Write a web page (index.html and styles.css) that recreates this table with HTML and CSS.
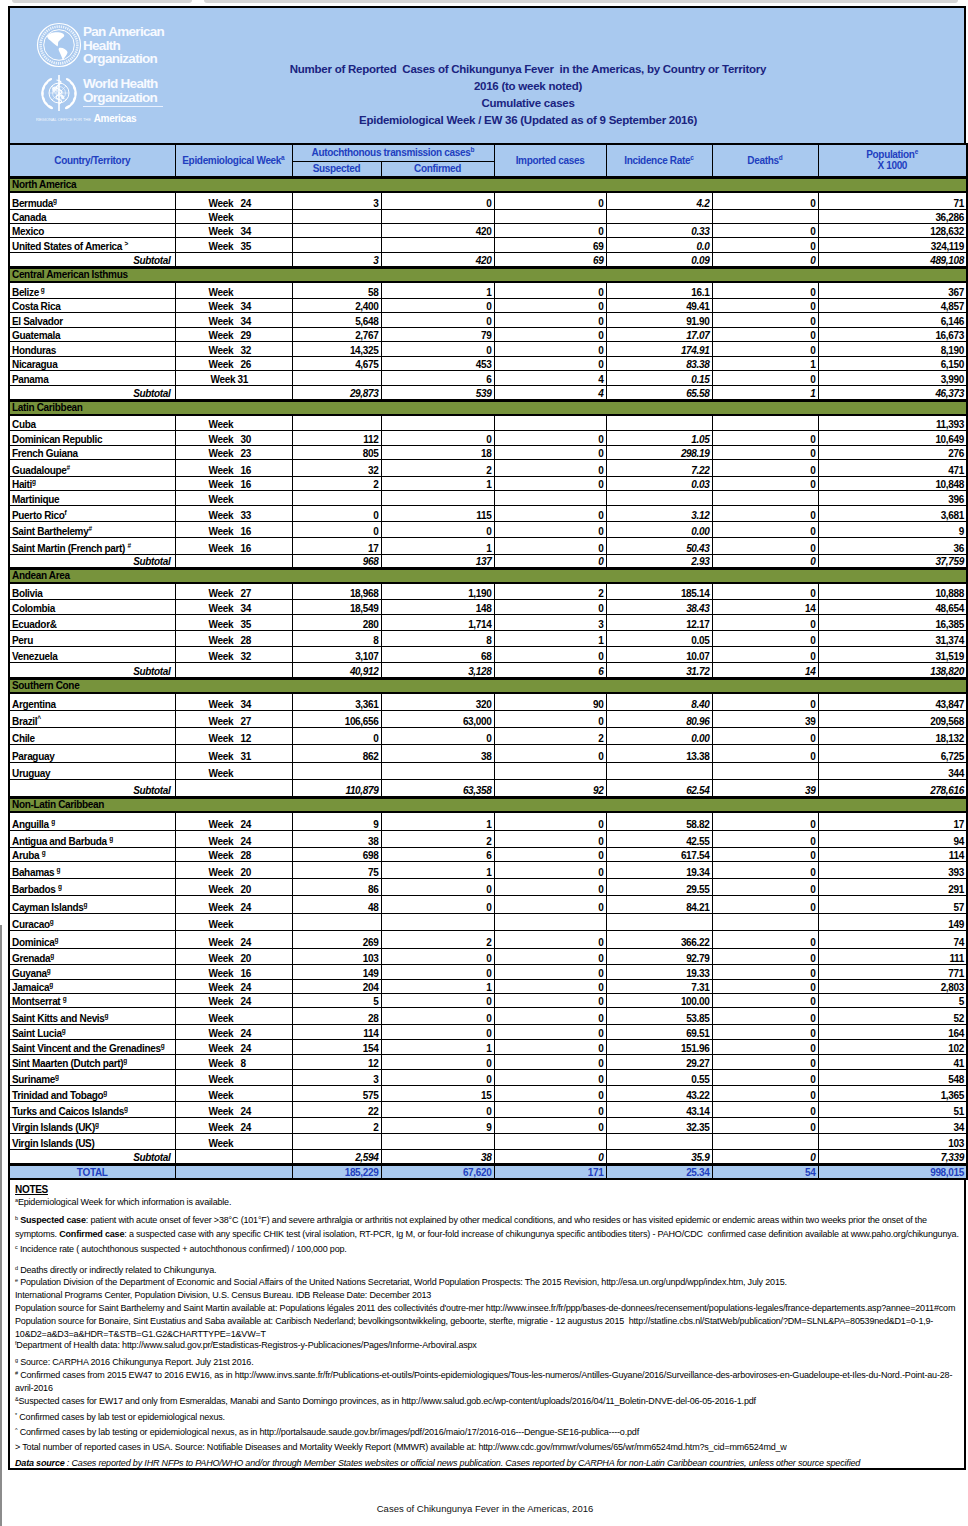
FILE: index.html
```html
<!DOCTYPE html>
<html>
<head>
<meta charset="utf-8">
<link rel="stylesheet" href="styles.css">
</head>
<body>
<div class="strip"><span class="a"></span><span class="b"></span></div>
<div class="doc">
  <div class="hdr">
    <div class="logos">
      <div class="lrow">
        <svg class="paho" width="46" height="46" viewBox="0 0 46 46">
          <circle cx="23" cy="23" r="21.5" fill="none" stroke="#fff" stroke-width="1.2"/>
          <circle cx="23" cy="23" r="18.4" fill="none" stroke="#fff" stroke-width="2.6" stroke-dasharray="1.3 0.9" opacity=".75"/>
          <circle cx="23" cy="23" r="15.3" fill="none" stroke="#fff" stroke-width="1"/>
          <path fill="#fff" d="M11 14C13 11 19 9.5 24 10.5C27 11 29.5 13 27.5 15C25.5 16 24.5 18 22.5 19.5C21.5 21 22.5 23 21.5 24.5C19.5 22.5 17 21.5 15.5 19.5C13.5 18 11.5 16.5 11 14Z"/>
          <path fill="#fff" d="M23 26C26 25 30 27 31.5 30C31.5 33 28.5 35 27 38.5C26 36 25 33 24 31C23 29 22 27.5 23 26Z"/>
        </svg>
        <div class="ltxt">Pan American<br>Health<br>Organization</div>
      </div>
      <div class="lrow two">
        <svg class="who" width="46" height="38" viewBox="0 0 46 38">
          <defs>
            <g id="lv" fill="#fff">
              <ellipse cx="14" cy="33" rx="3.4" ry="1.3" transform="rotate(30 14 33)"/>
              <ellipse cx="10" cy="29.5" rx="3.4" ry="1.3" transform="rotate(50 10 29.5)"/>
              <ellipse cx="7.5" cy="25" rx="3.4" ry="1.3" transform="rotate(70 7.5 25)"/>
              <ellipse cx="6.5" cy="19.5" rx="3.4" ry="1.3" transform="rotate(90 6.5 19.5)"/>
              <ellipse cx="7.5" cy="14" rx="3.4" ry="1.3" transform="rotate(110 7.5 14)"/>
              <ellipse cx="10" cy="9.5" rx="3.4" ry="1.3" transform="rotate(130 10 9.5)"/>
              <ellipse cx="13.5" cy="6" rx="3" ry="1.2" transform="rotate(150 13.5 6)"/>
            </g>
          </defs>
          <use href="#lv"/>
          <use href="#lv" transform="translate(46 0) scale(-1 1)"/>
          <g fill="none" stroke="#fff">
            <circle cx="23" cy="19" r="10" stroke-width="1"/>
            <circle cx="23" cy="19" r="6.5" stroke-width=".6"/>
            <circle cx="23" cy="19" r="3.2" stroke-width=".6"/>
            <path d="M13 19H33M16 12L30 26M30 12L16 26" stroke-width=".5"/>
          </g>
          <path fill="#fff" opacity=".85" d="M16 14C18 12 21 12 22 14C21 16 19 17 18 19C17 18 16 16 16 14ZM24 21C27 20 29 22 28 25C26 26 25 24 24 21Z"/>
          <path d="M23 1V37" stroke="#fff" stroke-width="1.6"/>
          <path d="M20.5 6C25 6.5 26.5 8.5 23 10.5S19 14 23 15.5S27 18.5 23 20.5S19 24 23 25.5S26 28 23 30" fill="none" stroke="#fff" stroke-width="1.2"/>
        </svg>
        <div class="ltxt">World Health<br>Organization<div class="uline"></div></div>
      </div>
      <div class="reg"><span class="tiny">REGIONAL OFFICE FOR THE</span> <b>Americas</b></div>
    </div>
    <div class="title">
      <div>Number of Reported&nbsp; Cases of Chikungunya Fever&nbsp; in the Americas, by Country or Territory</div>
      <div>2016 (to week noted)</div>
      <div>Cumulative cases</div>
      <div>Epidemiological Week / EW 36 (Updated as of 9 September 2016)</div>
    </div>
  </div>

  <table class="t">
    <colgroup>
      <col class="k1"><col class="k2"><col class="k3"><col class="k4"><col class="k5"><col class="k6"><col class="k7"><col class="k8">
    </colgroup>
    <thead>
      <tr class="hr1">
        <th rowspan="2">Country/Territory</th>
        <th rowspan="2">Epidemiological Week<sup>a</sup></th>
        <th colspan="2">Autochthonous transmission cases<sup>b</sup></th>
        <th rowspan="2">Imported cases</th>
        <th rowspan="2">Incidence Rate<sup>c</sup></th>
        <th rowspan="2">Deaths<sup>d</sup></th>
        <th rowspan="2">Population<sup>e</sup><br>X 1000</th>
      </tr>
      <tr class="hr2"><th>Suspected</th><th>Confirmed</th></tr>
    </thead>
    <tbody>
      <tr class="band"><td colspan="8">North America</td></tr>
      <tr class="r17"><td class="c">Bermuda<sup>g</sup></td><td class="w"><span class="wk">Week</span>24</td><td>3</td><td>0</td><td>0</td><td class="it">4.2</td><td>0</td><td>71</td></tr>
      <tr class="r14"><td class="c">Canada</td><td class="w"><span class="wk">Week</span></td><td></td><td></td><td></td><td></td><td></td><td class="nb">36,286</td></tr>
      <tr class="r14"><td class="c">Mexico</td><td class="w"><span class="wk">Week</span>34</td><td></td><td>420</td><td>0</td><td class="it">0.33</td><td>0</td><td>128,632</td></tr>
      <tr class="r15"><td class="c">United States of America <sup>&gt;</sup></td><td class="w"><span class="wk">Week</span>35</td><td></td><td></td><td class="nb">69</td><td class="it">0.0</td><td>0</td><td>324,119</td></tr>
      <tr class="r15 sub"><td>Subtotal</td><td></td><td>3</td><td>420</td><td>69</td><td>0.09</td><td>0</td><td>489,108</td></tr>

      <tr class="band"><td colspan="8">Central American Isthmus</td></tr>
      <tr class="r16"><td class="c">Belize<sup> g</sup></td><td class="w"><span class="wk">Week</span></td><td>58</td><td>1</td><td>0</td><td class="nb">16.1</td><td>0</td><td>367</td></tr>
      <tr class="r14"><td class="c">Costa Rica</td><td class="w"><span class="wk">Week</span>34</td><td>2,400</td><td>0</td><td>0</td><td class="nb">49.41</td><td>0</td><td>4,857</td></tr>
      <tr class="r15"><td class="c">El Salvador</td><td class="w"><span class="wk">Week</span>34</td><td>5,648</td><td>0</td><td>0</td><td class="nb">91.90</td><td>0</td><td>6,146</td></tr>
      <tr class="r14"><td class="c">Guatemala</td><td class="w"><span class="wk">Week</span>29</td><td>2,767</td><td>79</td><td>0</td><td class="it">17.07</td><td>0</td><td>16,673</td></tr>
      <tr class="r15"><td class="c">Honduras</td><td class="w"><span class="wk">Week</span>32</td><td>14,325</td><td>0</td><td>0</td><td class="it">174.91</td><td>0</td><td>8,190</td></tr>
      <tr class="r14"><td class="c">Nicaragua</td><td class="w"><span class="wk">Week</span>26</td><td>4,675</td><td>453</td><td>0</td><td class="it">83.38</td><td>1</td><td>6,150</td></tr>
      <tr class="r15"><td class="c">Panama</td><td class="w pw"><span class="wk2">Week</span>31</td><td></td><td>6</td><td>4</td><td class="it">0.15</td><td>0</td><td>3,990</td></tr>
      <tr class="r15 sub"><td>Subtotal</td><td></td><td>29,873</td><td>539</td><td>4</td><td class="nb">65.58</td><td>1</td><td>46,373</td></tr>

      <tr class="band"><td colspan="8">Latin Caribbean</td></tr>
      <tr class="r15"><td class="c">Cuba</td><td class="w"><span class="wk">Week</span></td><td></td><td></td><td></td><td></td><td></td><td>11,393</td></tr>
      <tr class="r15"><td class="c">Dominican Republic</td><td class="w"><span class="wk">Week</span>30</td><td>112</td><td>0</td><td>0</td><td class="it">1.05</td><td>0</td><td>10,649</td></tr>
      <tr class="r14"><td class="c">French Guiana</td><td class="w"><span class="wk">Week</span>23</td><td>805</td><td>18</td><td>0</td><td class="it">298.19</td><td>0</td><td>276</td></tr>
      <tr class="r17"><td class="c">Guadaloupe<sup>#</sup></td><td class="w"><span class="wk">Week</span>16</td><td>32</td><td>2</td><td>0</td><td class="it">7.22</td><td>0</td><td>471</td></tr>
      <tr class="r14"><td class="c">Haiti<sup>g</sup></td><td class="w"><span class="wk">Week</span>16</td><td>2</td><td>1</td><td>0</td><td class="it">0.03</td><td>0</td><td>10,848</td></tr>
      <tr class="r15"><td class="c">Martinique</td><td class="w"><span class="wk">Week</span></td><td></td><td></td><td></td><td></td><td></td><td>396</td></tr>
      <tr class="r16"><td class="c">Puerto Rico<sup>f</sup></td><td class="w"><span class="wk">Week</span>33</td><td>0</td><td>115</td><td>0</td><td class="it">3.12</td><td>0</td><td>3,681</td></tr>
      <tr class="r16"><td class="c">Saint Barthelemy<sup>#</sup></td><td class="w"><span class="wk">Week</span>16</td><td>0</td><td>0</td><td>0</td><td class="it">0.00</td><td>0</td><td>9</td></tr>
      <tr class="r17"><td class="c">Saint Martin (French part) <sup>#</sup></td><td class="w"><span class="wk">Week</span>16</td><td>17</td><td>1</td><td>0</td><td class="it">50.43</td><td>0</td><td>36</td></tr>
      <tr class="r14 sub"><td>Subtotal</td><td></td><td>968</td><td>137</td><td>0</td><td>2.93</td><td>0</td><td>37,759</td></tr>

      <tr class="band"><td colspan="8">Andean Area</td></tr>
      <tr class="r16"><td class="c">Bolivia</td><td class="w"><span class="wk">Week</span>27</td><td>18,968</td><td>1,190</td><td>2</td><td class="nb">185.14</td><td>0</td><td>10,888</td></tr>
      <tr class="r15"><td class="c">Colombia</td><td class="w"><span class="wk">Week</span>34</td><td>18,549</td><td>148</td><td>0</td><td class="it">38.43</td><td>14</td><td>48,654</td></tr>
      <tr class="r16"><td class="c">Ecuador&amp;</td><td class="w"><span class="wk">Week</span>35</td><td>280</td><td>1,714</td><td>3</td><td class="nb">12.17</td><td>0</td><td>16,385</td></tr>
      <tr class="r16"><td class="c">Peru</td><td class="w"><span class="wk">Week</span>28</td><td>8</td><td>8</td><td>1</td><td class="nb">0.05</td><td>0</td><td>31,374</td></tr>
      <tr class="r16"><td class="c">Venezuela</td><td class="w"><span class="wk">Week</span>32</td><td>3,107</td><td>68</td><td>0</td><td class="nb">10.07</td><td>0</td><td>31,519</td></tr>
      <tr class="r16 sub"><td>Subtotal</td><td></td><td>40,912</td><td>3,128</td><td>6</td><td>31.72</td><td>14</td><td>138,820</td></tr>

      <tr class="band"><td colspan="8">Southern Cone</td></tr>
      <tr class="r17"><td class="c">Argentina</td><td class="w"><span class="wk">Week</span>34</td><td>3,361</td><td>320</td><td>90</td><td class="it">8.40</td><td>0</td><td>43,847</td></tr>
      <tr class="r17"><td class="c">Brazil<sup>^</sup></td><td class="w"><span class="wk">Week</span>27</td><td>106,656</td><td>63,000</td><td>0</td><td class="it">80.96</td><td>39</td><td>209,568</td></tr>
      <tr class="r17"><td class="c">Chile</td><td class="w"><span class="wk">Week</span>12</td><td>0</td><td>0</td><td>2</td><td class="it">0.00</td><td>0</td><td>18,132</td></tr>
      <tr class="r18"><td class="c">Paraguay</td><td class="w"><span class="wk">Week</span>31</td><td>862</td><td>38</td><td>0</td><td class="nb">13.38</td><td>0</td><td>6,725</td></tr>
      <tr class="r17"><td class="c">Uruguay</td><td class="w"><span class="wk">Week</span></td><td></td><td></td><td></td><td></td><td></td><td>344</td></tr>
      <tr class="r18 sub"><td>Subtotal</td><td></td><td>110,879</td><td>63,358</td><td>92</td><td>62.54</td><td>39</td><td>278,616</td></tr>

      <tr class="band"><td colspan="8">Non-Latin Caribbean</td></tr>
      <tr class="r18"><td class="c">Anguilla <sup>g</sup></td><td class="w"><span class="wk">Week</span>24</td><td>9</td><td>1</td><td>0</td><td class="nb">58.82</td><td>0</td><td>17</td></tr>
      <tr class="r17"><td class="c">Antigua and Barbuda <sup>g</sup></td><td class="w"><span class="wk">Week</span>24</td><td>38</td><td>2</td><td>0</td><td class="nb">42.55</td><td>0</td><td>94</td></tr>
      <tr class="r14"><td class="c">Aruba <sup>g</sup></td><td class="w"><span class="wk">Week</span>28</td><td>698</td><td>6</td><td>0</td><td class="nb">617.54</td><td>0</td><td>114</td></tr>
      <tr class="r17"><td class="c">Bahamas <sup>g</sup></td><td class="w"><span class="wk">Week</span>20</td><td>75</td><td>1</td><td>0</td><td class="nb">19.34</td><td>0</td><td>393</td></tr>
      <tr class="r17"><td class="c">Barbados <sup>g</sup></td><td class="w"><span class="wk">Week</span>20</td><td>86</td><td>0</td><td>0</td><td class="nb">29.55</td><td>0</td><td>291</td></tr>
      <tr class="r18"><td class="c">Cayman Islands<sup>g</sup></td><td class="w"><span class="wk">Week</span>24</td><td>48</td><td>0</td><td>0</td><td class="nb">84.21</td><td>0</td><td>57</td></tr>
      <tr class="r17"><td class="c">Curacao<sup>g</sup></td><td class="w"><span class="wk">Week</span></td><td></td><td></td><td></td><td></td><td></td><td>149</td></tr>
      <tr class="r18"><td class="c">Dominica<sup>g</sup></td><td class="w"><span class="wk">Week</span>24</td><td>269</td><td>2</td><td>0</td><td class="nb">366.22</td><td>0</td><td>74</td></tr>
      <tr class="r16"><td class="c">Grenada<sup>g</sup></td><td class="w"><span class="wk">Week</span>20</td><td>103</td><td>0</td><td>0</td><td class="nb">92.79</td><td>0</td><td>111</td></tr>
      <tr class="r15"><td class="c">Guyana<sup>g</sup></td><td class="w"><span class="wk">Week</span>16</td><td>149</td><td>0</td><td>0</td><td class="nb">19.33</td><td>0</td><td>771</td></tr>
      <tr class="r14"><td class="c">Jamaica<sup>g</sup></td><td class="w"><span class="wk">Week</span>24</td><td>204</td><td>1</td><td>0</td><td class="nb">7.31</td><td>0</td><td>2,803</td></tr>
      <tr class="r14"><td class="c">Montserrat <sup>g</sup></td><td class="w"><span class="wk">Week</span>24</td><td>5</td><td>0</td><td>0</td><td class="nb">100.00</td><td>0</td><td>5</td></tr>
      <tr class="r17"><td class="c">Saint Kitts and Nevis<sup>g</sup></td><td class="w"><span class="wk">Week</span></td><td>28</td><td>0</td><td>0</td><td class="nb">53.85</td><td>0</td><td>52</td></tr>
      <tr class="r15"><td class="c">Saint Lucia<sup>g</sup></td><td class="w"><span class="wk">Week</span>24</td><td>114</td><td>0</td><td>0</td><td class="nb">69.51</td><td>0</td><td>164</td></tr>
      <tr class="r15"><td class="c">Saint Vincent and the Grenadines<sup>g</sup></td><td class="w"><span class="wk">Week</span>24</td><td>154</td><td>1</td><td>0</td><td class="nb">151.96</td><td>0</td><td>102</td></tr>
      <tr class="r15"><td class="c">Sint Maarten (Dutch part)<sup>g</sup></td><td class="w"><span class="wk">Week</span>8</td><td>12</td><td>0</td><td>0</td><td class="nb">29.27</td><td>0</td><td>41</td></tr>
      <tr class="r16"><td class="c">Suriname<sup>g</sup></td><td class="w"><span class="wk">Week</span></td><td>3</td><td>0</td><td>0</td><td class="nb">0.55</td><td>0</td><td>548</td></tr>
      <tr class="r16"><td class="c">Trinidad and Tobago<sup>g</sup></td><td class="w"><span class="wk">Week</span></td><td>575</td><td>15</td><td>0</td><td class="nb">43.22</td><td>0</td><td>1,365</td></tr>
      <tr class="r16"><td class="c">Turks and Caicos Islands<sup>g</sup></td><td class="w"><span class="wk">Week</span>24</td><td>22</td><td>0</td><td>0</td><td class="nb">43.14</td><td>0</td><td>51</td></tr>
      <tr class="r16"><td class="c">Virgin Islands (UK)<sup>g</sup></td><td class="w"><span class="wk">Week</span>24</td><td>2</td><td>9</td><td>0</td><td class="nb">32.35</td><td>0</td><td>34</td></tr>
      <tr class="r16"><td class="c">Virgin Islands (US)</td><td class="w"><span class="wk">Week</span></td><td></td><td></td><td></td><td></td><td></td><td>103</td></tr>
      <tr class="r15 sub"><td>Subtotal</td><td></td><td>2,594</td><td>38</td><td>0</td><td class="nb">35.9</td><td>0</td><td>7,339</td></tr>

      <tr class="r15 tot"><td>TOTAL</td><td></td><td>185,229</td><td>67,620</td><td>171</td><td>25.34</td><td>54</td><td>998,015</td></tr>
    </tbody>
  </table>

  <div class="notes">
    <div class="nl head"><u>NOTES</u></div>
    <div class="nl m0"><sup>a</sup>Epidemiological Week for which information is available.</div>
    <div class="nl m5"><sup>b</sup> <b>Suspected case</b>: patient with acute onset of fever &gt;38°C (101°F) and severe arthralgia or arthritis not explained by other medical conditions, and who resides or has visited epidemic or endemic areas within two weeks prior the onset of the</div>
    <div class="nl m1">symptoms. <b>Confirmed case</b>: a suspected case with any specific CHIK test (viral isolation, RT-PCR, Ig M, or four-fold increase of chikungunya specific antibodies titers) - PAHO/CDC&nbsp; confirmed case definition available at www.paho.org/chikungunya.</div>
    <div class="nl m2"><sup>c</sup> Incidence rate ( autochthonous suspected + autochthonous confirmed) / 100,000 pop.</div>
    <div class="nl m8"><sup>d</sup> Deaths directly or indirectly related to Chikungunya.</div>
    <div class="nl mn1"><sup>e</sup> Population Division of the Department of Economic and Social Affairs of the United Nations Secretariat, World Population Prospects: The 2015 Revision, http://esa.un.org/unpd/wpp/index.htm, July 2015.</div>
    <div class="nl m0">International Programs Center, Population Division, U.S. Census Bureau. IDB Release Date: December 2013</div>
    <div class="nl m0">Population source for Saint Barthelemy and Saint Martin available at: Populations légales 2011 des collectivités d'outre-mer http://www.insee.fr/fr/ppp/bases-de-donnees/recensement/populations-legales/france-departements.asp?annee=2011#com</div>
    <div class="nl m0">Population source for Bonaire, Sint Eustatius and Saba available at: Caribisch Nederland; bevolkingsontwikkeling, geboorte, sterfte, migratie - 12 augustus 2015&nbsp; http://statline.cbs.nl/StatWeb/publication/?DM=SLNL&amp;PA=80539ned&amp;D1=0-1,9-</div>
    <div class="nl cut">10&amp;D2=a&amp;D3=a&amp;HDR=T&amp;STB=G1,G2&amp;CHARTTYPE=1&amp;VW=T</div>
    <div class="nl m2"><sup>f</sup>Department of Health data: http://www.salud.gov.pr/Estadisticas-Registros-y-Publicaciones/Pages/Informe-Arboviral.aspx</div>
    <div class="nl m4"><sup>g</sup> Source: CARPHA 2016 Chikungunya Report. July 21st 2016.</div>
    <div class="nl m0"><sup>#</sup> Confirmed cases from 2015 EW47 to 2016 EW16, as in http://www.invs.sante.fr/fr/Publications-et-outils/Points-epidemiologiques/Tous-les-numeros/Antilles-Guyane/2016/Surveillance-des-arboviroses-en-Guadeloupe-et-Iles-du-Nord.-Point-au-28-</div>
    <div class="nl cut">avril-2016</div>
    <div class="nl m4"><sup>&amp;</sup>Suspected cases for EW17 and only from Esmeraldas, Manabi and Santo Domingo provinces, as in http://www.salud.gob.ec/wp-content/uploads/2016/04/11_Boletin-DNVE-del-06-05-2016-1.pdf</div>
    <div class="nl m3"><sup>*</sup> Confirmed cases by lab test or epidemiological nexus.</div>
    <div class="nl m2"><sup>^</sup> Confirmed cases by lab testing or epidemiological nexus, as in http://portalsaude.saude.gov.br/images/pdf/2016/maio/17/2016-016---Dengue-SE16-publica----o.pdf</div>
    <div class="nl m2">&gt; Total number of reported cases in USA. Source: Notifiable Diseases and Mortality Weekly Report (MMWR) available at: http://www.cdc.gov/mmwr/volumes/65/wr/mm6524md.htm?s_cid=mm6524md_w</div>
    <div class="nl m3 ds"><b>Data source</b> : Cases reported by IHR NFPs to PAHO/WHO and/or through Member States websites or official news publication. Cases reported by CARPHA for non-Latin Caribbean countries, unless other source specified</div>
  </div>
</div>
<div class="foot">Cases of Chikungunya Fever in the Americas, 2016</div>
</body>
</html>
```

FILE: styles.css
```css
* { box-sizing: border-box; }
body {
  margin: 0;
  color: #000;
  font-family: "Liberation Sans", Arial, sans-serif;
  background: #fff linear-gradient(#8c8c8c, #8c8c8c) no-repeat left 0 top 925px / 2px 700px;
}
.strip { display: flex; gap: 12px; height: 6px; padding: 0 10px 0 12px; }
.strip span { height: 3px; background: #d6d6d6; border-radius: 0 0 3px 3px; }
.strip .a { width: 180px; }
.strip .b { flex: 1; }

.doc { margin-left: 8px; width: 958px; }

.hdr {
  height: 137px;
  background: #a9c9ef;
  border: 2px solid #000;
  border-bottom: 0;
  display: flex;
}
.logos { width: 165px; padding: 14px 0 0 26px; color: #fff; }
.lrow { display: flex; align-items: flex-start; }
.lrow.two { margin-top: 4px; }
.paho { display: block; flex: none; }
.who { display: block; flex: none; margin-top: 2px; }
.ltxt {
  font-weight: bold;
  color: #f7faff;
  font-size: 13.5px;
  line-height: 13.5px;
  letter-spacing: -0.7px;
  white-space: nowrap;
  padding-top: 3px;
  padding-left: 1px;
}
.lrow.two .ltxt { padding-top: 5px; }
.uline { width: 80px; height: 1px; background: #e8f0ff; margin-top: 2px; }
.reg { margin-top: 1px; font-size: 10px; line-height: 12px; white-space: nowrap; color: #fff; }
.reg .tiny { font-size: 4px; vertical-align: 1px; opacity: .9; }
.reg b { font-size: 10px; letter-spacing: -0.3px; }

.title {
  width: 706px;
  padding-top: 53px;
  text-align: center;
  color: #1a2380;
  font-size: 11.5px;
  font-weight: bold;
  line-height: 17px;
  letter-spacing: -0.25px;
  white-space: nowrap;
}

.t {
  width: 958px;
  border-collapse: collapse;
  table-layout: fixed;
  border: 2px solid #000;
  font-size: 10px;
  letter-spacing: -0.33px;
}
.k1 { width: 166px; } .k2 { width: 117px; } .k3 { width: 89px; } .k4 { width: 113px; }
.k5 { width: 112px; } .k6 { width: 106px; } .k7 { width: 106px; } .k8 { width: 149px; }

.t th {
  background: #a9c9ef;
  color: #1f3fbf;
  font-weight: bold;
  font-size: 10px;
  line-height: 11px;
  border: 1px solid #000;
  padding: 0 2px;
  text-align: center;
  vertical-align: middle;
  white-space: nowrap;
}
.t thead tr:first-child th { border-top: 2px solid #000; }
.t thead th[rowspan] { border-bottom: 3px solid #000; }
.t .hr2 th { border-bottom: 3px solid #000; }
.hr1 { height: 17px; }
.hr2 { height: 16px; }
.t sup { font-size: 6.5px; line-height: 0; vertical-align: 4px; letter-spacing: 0; }

.t td {
  border: 1px solid #000;
  padding: 0 2px 0 2px;
  font-weight: bold;
  text-align: right;
  vertical-align: bottom;
  line-height: 11px;
  white-space: nowrap;
  overflow: hidden;
}
.t td.c { text-align: left; }
.t td.w { text-align: left; padding-left: 33px; }
.t td.pw { padding-left: 35px; }
.wk { display: inline-block; width: 32px; }
.wk2 { display: inline-block; width: 27px; }
.t td.it { font-style: italic; }
.t td.nb { font-weight: bold; }

.r14 { height: 14px; }
.r15 { height: 15px; }
.r16 { height: 16px; }
.r17 { height: 17px; }
.r18 { height: 18px; }

.band td {
  background: #77933c;
  border-top: 2px solid #000;
  border-bottom: 2px solid #000;
  border-left: 0;
  border-right: 0;
  text-align: left;
  height: 15px;
  vertical-align: middle;
}
.sub td { font-style: italic; border-bottom: 3px solid #000; }
.sub td:first-child { text-align: right; padding-right: 4px; }
.tot td {
  background: #a9c9ef;
  color: #1f3fbf;
  border-top: 2px solid #000;
  border-bottom: 2px solid #000;
}
.tot td:first-child { text-align: center; }

.notes {
  border: 2px solid #000;
  border-top: 0;
  height: 290px;
  padding: 3px 0 0 5px;
  font-size: 9px;
  letter-spacing: -0.18px;
  overflow: hidden;
}
.nl { line-height: 13px; white-space: nowrap; }
.nl sup { font-size: 5.5px; line-height: 0; vertical-align: 3px; }
.nl.head { font-weight: bold; font-size: 10px; letter-spacing: -0.3px; }
.m0 { margin-top: 0; }
.m1 { margin-top: 1px; }
.m2 { margin-top: 2px; }
.m3 { margin-top: 3px; }
.m4 { margin-top: 4px; }
.m5 { margin-top: 5px; }
.m8 { margin-top: 8px; }
.mn1 { margin-top: -1px; }
.nl.cut { height: 9px; overflow: hidden; margin-top: 0; }
.ds { font-style: italic; }
.ds b { font-style: italic; }

.foot {
  text-align: center;
  width: 968px;
  padding-left: 2px;
  padding-top: 33px;
  font-size: 9.5px;
  color: #111;
}
```
